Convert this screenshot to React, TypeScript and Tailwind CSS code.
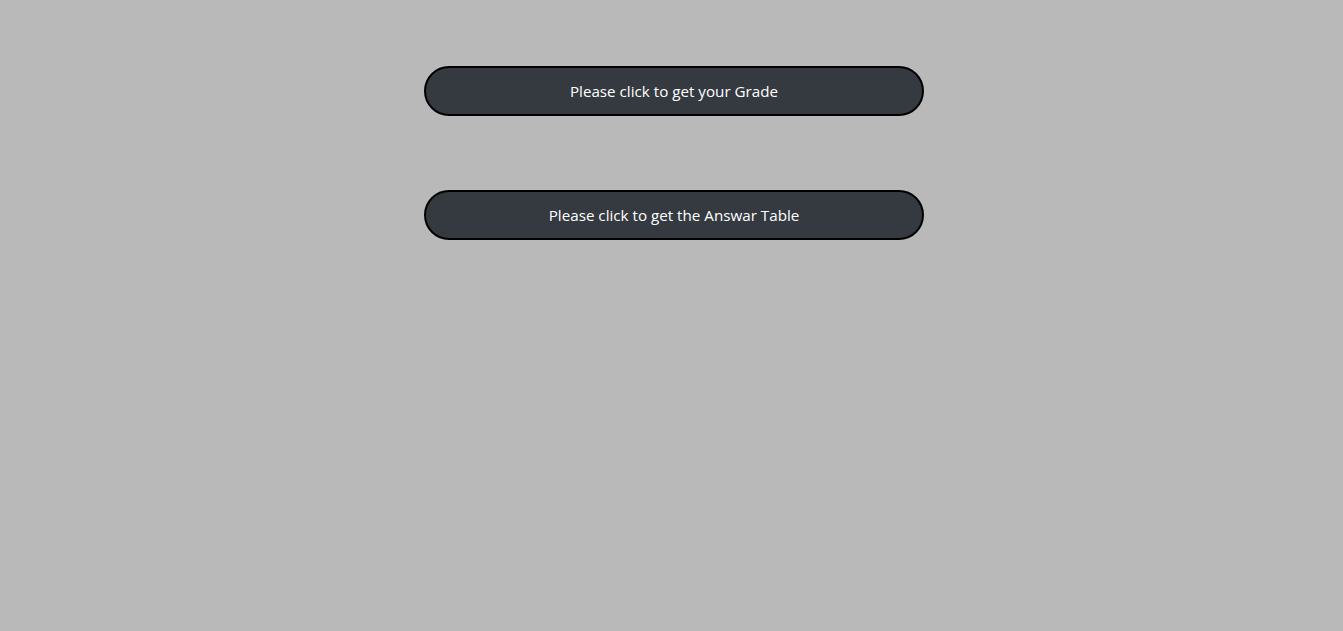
export default function App() {
  return (
    <div className="min-h-screen w-full bg-[#b9b9b9] pl-[424px] pt-[66px]">
      <div className="flex w-[500px] flex-col gap-[74px]">
        <button className="h-[50px] w-full rounded-full border-2 border-black bg-[#343a40] text-[15.2px] text-white font-['Open_Sans',sans-serif]">
          Please click to get your Grade
        </button>
        <button className="h-[50px] w-full rounded-full border-2 border-black bg-[#343a40] text-[15.2px] text-white font-['Open_Sans',sans-serif]">
          Please click to get the Answar Table
        </button>
      </div>
    </div>
  );
}
